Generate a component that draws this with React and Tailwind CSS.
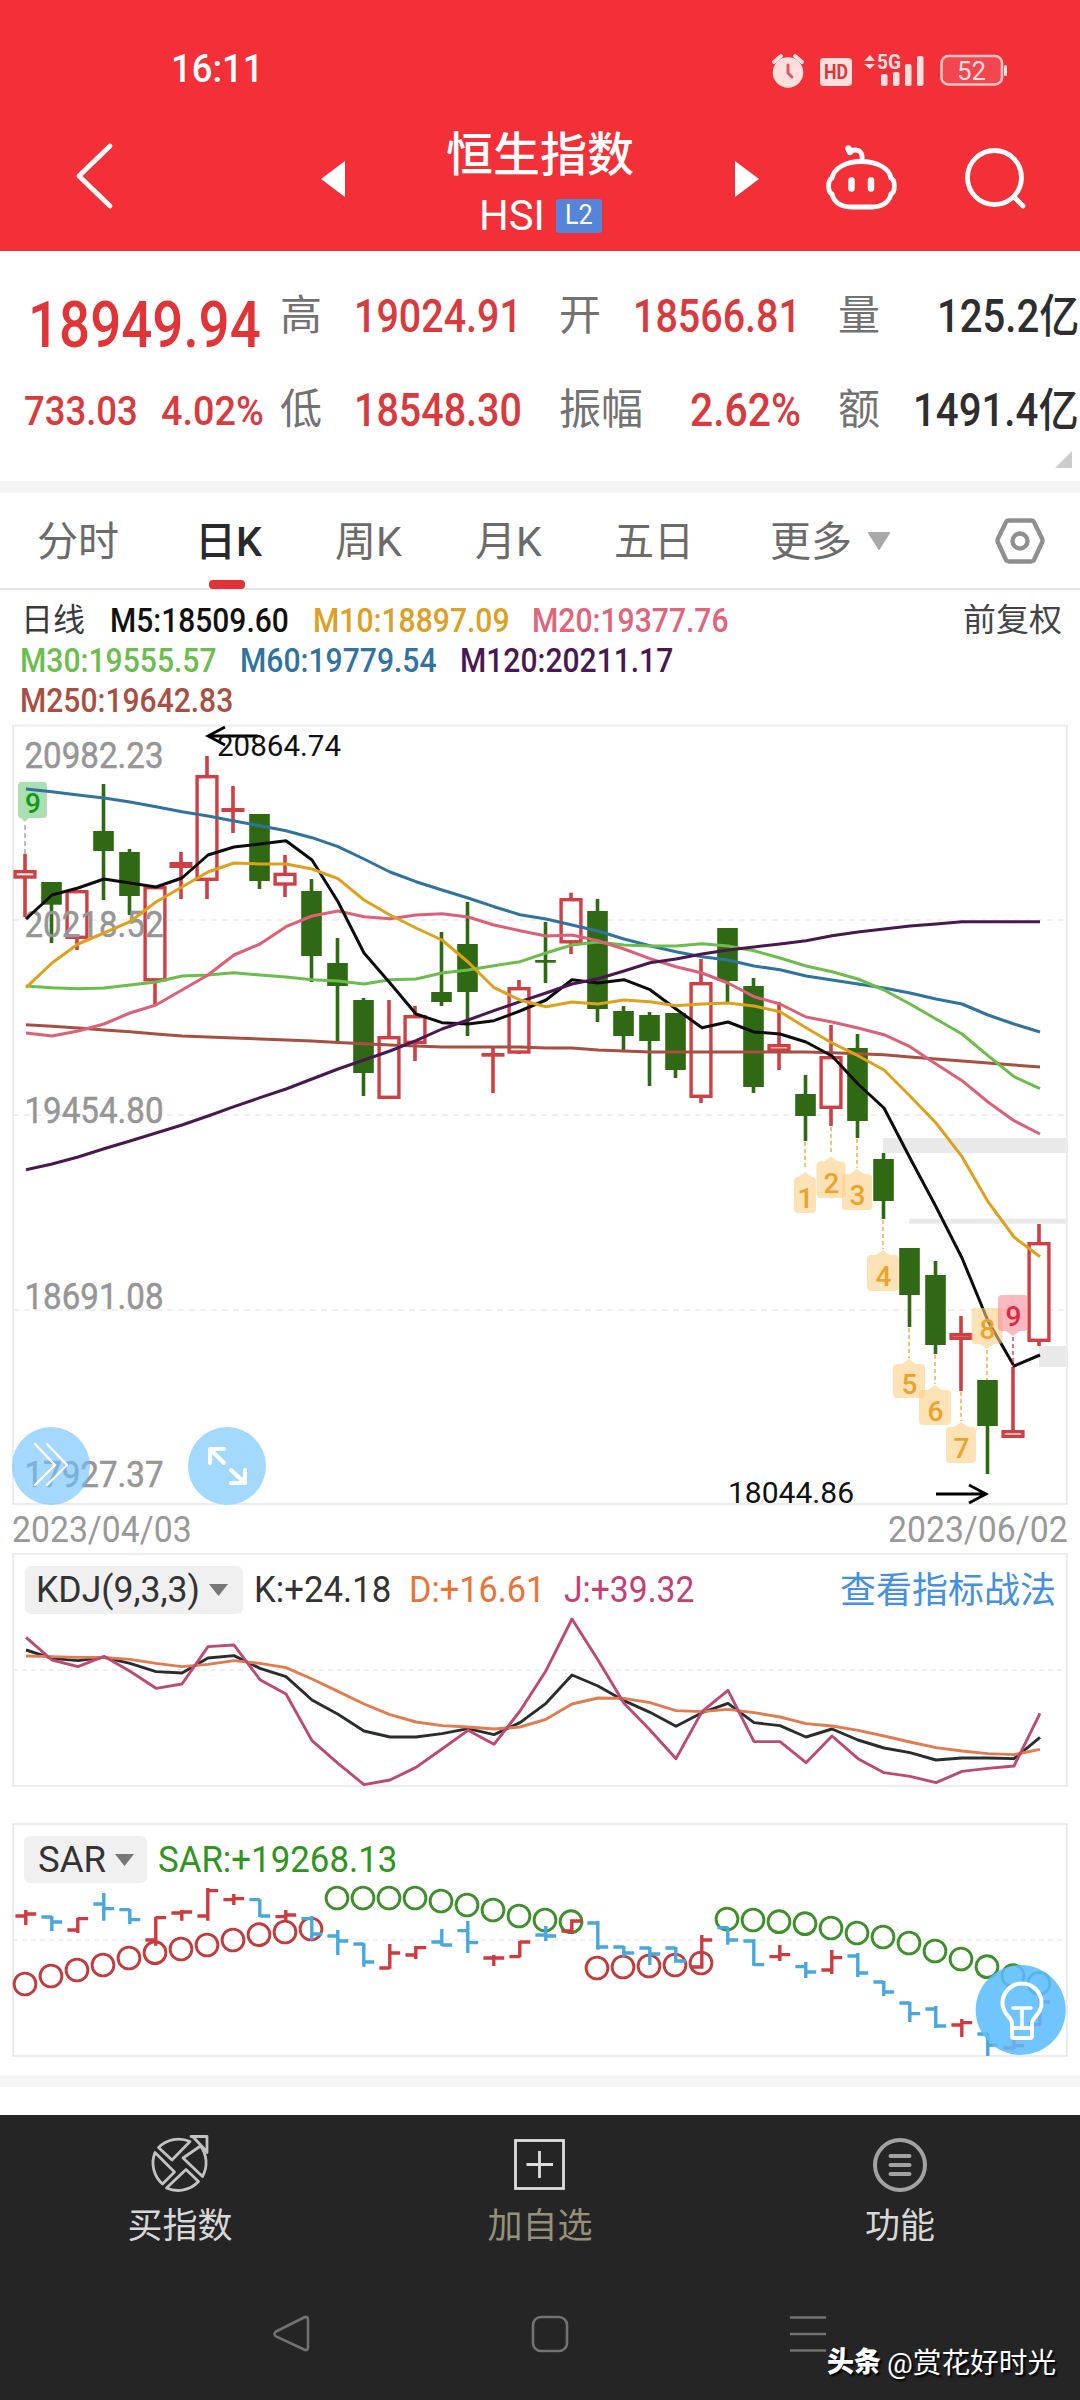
import React, { useLayoutEffect, useRef, useState } from "react";

const FONT = "font-['Roboto','Noto_Sans_CJK_SC',sans-serif]";

/* Text squeezed or stretched horizontally to fill the width of its box. */
function Fit({ className = "", children }) {
  const outer = useRef(null);
  const inner = useRef(null);
  const [scale, setScale] = useState(1);
  useLayoutEffect(() => {
    setScale(outer.current.clientWidth / inner.current.offsetWidth);
  }, [children]);
  return (
    <span ref={outer} className={"block shrink-0 leading-none " + className}>
      <span
        ref={inner}
        className="inline-block origin-left whitespace-nowrap align-top"
        style={{ transform: `scaleX(${scale})` }}
      >
        {children}
      </span>
    </span>
  );
}

const px = (i) => 25 + 26 * i;
const linePath = (ys) => ys.map((y, i) => `${px(i) + 1},${y}`).join(" ");

/* [direction, high, body top, body bottom, low] */
const CANDLES = [
  ["r", 854, 870, 878.7, 917], ["g", 882, 882, 904.7, 943], ["r", 890, 890, 939, 950],
  ["g", 784, 831, 851, 900], ["g", 849, 852, 896, 915], ["r", 886, 886, 981.5, 1004],
  ["r", 852, 862, 868, 899], ["r", 756, 775, 881, 899], ["r", 786, 808, 812, 833],
  ["g", 814, 814, 881, 889], ["r", 855, 872.7, 885.7, 897], ["g", 879, 891, 956, 982],
  ["g", 938, 963, 986, 1042], ["g", 998, 1000, 1073, 1096], ["r", 1000, 1036, 1099, 1099],
  ["r", 1006, 1015, 1044, 1061], ["g", 932, 992, 1002, 1006], ["g", 902, 944, 992, 1036],
  ["r", 1048, 1053, 1056.7, 1093], ["r", 980, 987, 1053.7, 1054], ["g", 922, 960, 962.7, 983],
  ["r", 892.7, 898, 943.5, 954], ["g", 899, 911, 1009, 1022], ["g", 1006, 1011, 1036, 1052],
  ["g", 1012, 1015, 1041, 1086], ["g", 1013, 1013, 1070, 1078], ["r", 959, 982, 1098, 1103],
  ["g", 928, 928, 981, 1002], ["g", 978, 986, 1087, 1093], ["r", 1002, 1044, 1051.7, 1070],
  ["g", 1075, 1094, 1116, 1141], ["r", 1025, 1056, 1109, 1126], ["g", 1034, 1048, 1121, 1138],
  ["g", 1153, 1159, 1201, 1219], ["g", 1248, 1248, 1295, 1327], ["g", 1261, 1275, 1345, 1354],
  ["r", 1316, 1333, 1340, 1391], ["g", 1380, 1380, 1426, 1474], ["r", 1367, 1430, 1438, 1438],
  ["r", 1224, 1242, 1342, 1346],
];

const M5 = [919, 895, 888, 879, 883, 887, 878, 855, 847, 844, 840.7, 860, 901.7, 953, 983, 1014, 1022.7, 1024, 1020.7, 1011, 1000, 979.7, 983, 979.7, 989.7, 1009, 1027.7, 1022, 1032, 1034, 1042, 1056, 1084, 1108, 1158, 1206.7, 1258, 1321, 1366, 1355];
const M10 = [987.7, 963, 944, 933, 921.7, 902, 887, 872, 863, 864, 864, 869, 878.7, 900, 915, 928, 940, 962, 987.7, 1000, 1006.7, 1002, 1004, 1000, 1001.7, 1005.7, 1004, 1003, 1006, 1011.7, 1027.7, 1043, 1055.7, 1070, 1096, 1123, 1156.7, 1201.7, 1237, 1256.7];
const M20 = [1033, 1036, 1031, 1024, 1013, 1005, 990, 975, 955, 944, 926.7, 916, 911, 916.7, 918.7, 915, 913.7, 917, 925, 930.7, 936, 935, 940.7, 949, 958.7, 966.7, 973, 983, 996.7, 1004, 1017, 1022, 1028, 1034.7, 1046.7, 1064, 1080.7, 1102, 1120.7, 1134];
const M30 = [986, 987.7, 988.7, 988, 985, 982, 976, 975, 972.7, 975, 977, 979.7, 981, 984, 979.7, 979, 973, 970, 965.7, 961.7, 953, 945, 942, 945, 946, 946, 943.7, 946, 950.7, 958, 966, 971.7, 979, 990, 1004, 1019, 1034, 1055.7, 1076.7, 1088.7];
const M60 = [789, 791.7, 795, 798, 802, 806.7, 811.7, 816, 821, 825.7, 830.7, 837.7, 846.7, 859, 872, 881.7, 890, 898, 906.7, 914.7, 919, 925, 931, 939, 945.7, 951.7, 956.7, 960, 966, 969.7, 976, 980, 984, 988, 993, 999, 1004, 1015, 1024, 1032];
const M120 = [1169.7, 1164, 1157, 1148.7, 1141, 1133, 1125, 1116, 1106.7, 1097.7, 1089, 1079, 1069, 1060, 1051, 1040.7, 1029, 1020, 1010.7, 1001.7, 993, 984, 978.7, 971, 962.7, 959, 954, 950, 947, 944, 940.7, 935.7, 932, 929, 926, 924, 921.7, 921.7, 921.7, 921.7];
const M250 = [1024.7, 1026.3, 1028, 1030, 1031.7, 1034, 1036, 1037, 1038, 1039, 1040, 1041, 1042.4, 1043.7, 1045, 1046, 1047, 1047, 1047, 1047, 1048, 1048, 1050, 1051, 1052, 1052, 1052, 1052, 1052, 1052, 1052, 1052.7, 1053.7, 1054.7, 1057, 1059, 1061, 1063, 1065, 1067];

const MAS = [
  [M250, "#a84f42"], [M60, "#31739f"], [M30, "#6cbd4c"], [M20, "#dc6078"],
  [M5, "#0c0c0c"], [M120, "#491850"], [M10, "#dda11c"],
];

/* [label, centre x, half width, tip y, far edge y, baseline, dash from, dash to, kind] */
const TAGS = [
  ["1", 805, 11, 1172, 1213, 1208, 1142, 1170, "o"],
  ["2", 831, 14.5, 1156.5, 1198, 1193, 1127, 1155, "o"],
  ["3", 857, 15, 1169, 1210, 1205, 1139, 1168, "o"],
  ["4", 883, 16, 1250, 1291, 1286, 1220, 1249, "o"],
  ["5", 909, 16, 1359, 1398, 1394, 1328, 1358, "o"],
  ["6", 935, 16, 1385, 1425, 1421, 1355, 1384, "o"],
  ["7", 961, 15, 1422, 1463, 1458, 1392, 1421, "o"],
  ["8", 987, 15.5, 1349, 1308, 1339, 1350, 1380, "o"],
  ["9", 1013, 15, 1336, 1295, 1326, 1337, 1366, "r"],
];

function Tag({ t }) {
  const [label, x, hw, tip, edge, base, d1, d2, kind] = t;
  const dir = edge > tip ? 1 : -1;
  const inner = tip + dir * 5;
  const fill = kind === "o" ? "#fbcf86" : "#f68a98";
  const ink = kind === "o" ? "#eda22c" : "#e0283a";
  const k = dir * 4;
  return (
    <g>
      <line x1={x} x2={x} y1={d1} y2={d2} stroke={ink} strokeWidth="1.3" strokeDasharray="4 3" />
      <path
        d={`M${x} ${tip}L${x + 7} ${inner}H${x + hw - 4}Q${x + hw} ${inner} ${x + hw} ${inner + k}V${edge - k}Q${x + hw} ${edge} ${x + hw - 4} ${edge}H${x - hw + 4}Q${x - hw} ${edge} ${x - hw} ${edge - k}V${inner + k}Q${x - hw} ${inner} ${x - hw + 4} ${inner}H${x - 7}Z`}
        fill={fill}
        fillOpacity="0.6"
      />
      <text x={x + 0.5} y={base} textAnchor="middle" fontSize="28" fontWeight="500" fill={ink}>{label}</text>
    </g>
  );
}

function Candle({ c, i }) {
  const [dir, hi, top, bot, lo] = c;
  const x = px(i);
  if (dir === "g") {
    return (
      <g fill="#2f6913">
        <rect x={x - 1.3} y={hi} width="3.6" height={lo - hi} />
        <rect x={x - 9.8} y={top} width="20.6" height={bot - top} />
      </g>
    );
  }
  const h = bot - top;
  return (
    <g fill="#d03f43">
      <rect x={x - 1.8} y={hi} width="3.6" height={top - hi + 1} />
      <rect x={x - 1.8} y={bot - 1} width="3.6" height={Math.max(lo - bot + 1, 1)} />
      {h < 6.5 ? (
        <rect x={x - 11.5} y={top} width="23" height={h} />
      ) : (
        <rect x={x - 9.9} y={top + 1.7} width="19.8" height={h - 3.4} fill="#fff" stroke="#d03f43" strokeWidth="3.4" />
      )}
    </g>
  );
}

const Y_LABELS = [["20982.23", 768], ["20218.52", 937], ["19454.80", 1122.5], ["18691.08", 1309], ["17927.37", 1487]];

function MainChart() {
  return (
    <svg viewBox="0 720 1080 790" className="block h-[790px] w-[1080px]">
      <g stroke="#efefef" strokeWidth="2" strokeDasharray="6 5">
        <line x1="13" x2="1067" y1="920" y2="920" />
        <line x1="13" x2="1067" y1="1115" y2="1115" />
        <line x1="13" x2="1067" y1="1310" y2="1310" />
      </g>
      <g fill="#e9e9e9">
        <rect x="883" y="1138" width="184" height="15" />
        <rect x="909" y="1218.7" width="158" height="5" />
        <rect x="1039" y="1346" width="28" height="21" />
      </g>
      <rect x="13" y="725.5" width="1054" height="778.5" fill="none" stroke="#ececec" strokeWidth="2" />
      {CANDLES.map((c, i) => <Candle key={i} c={c} i={i} />)}
      <g fill="#969696" fontSize="36" fontWeight="400" stroke="#969696" strokeWidth="0.5">
        {Y_LABELS.map(([t, y]) => (
          <text key={t} x="24.5" y={y} textLength="139" lengthAdjust="spacingAndGlyphs">{t}</text>
        ))}
      </g>
      <path d="M21 782H44Q47 782 47 786V814Q47 818 43 818H29L25 822L21 818Q18 818 18 814V786Q18 782 21 782Z" fill="#a9dfb1" />
      <line x1="25" x2="25" y1="825" y2="854" stroke="#9a9a9a" strokeWidth="1.3" strokeDasharray="5 3" />
      <text x="33" y="813" textAnchor="middle" fontSize="28" fontWeight="500" fill="#109a14">9</text>
      {MAS.map(([ys, color], k) => (
        <polyline key={k} points={linePath(ys)} fill="none" stroke={color} strokeWidth="3" strokeLinejoin="round" />
      ))}
      {TAGS.map((t) => <Tag key={t[0]} t={t} />)}
      <g stroke="#000" strokeWidth="2.8" fill="none">
        <path d="M258 736H208M225 727L208 736L225 745" />
        <path d="M936 1494H986M969 1485L986 1494L969 1503" />
      </g>
      <g fill="#111" fontSize="30" fontWeight="400">
        <text x="217" y="756" textLength="124" lengthAdjust="spacingAndGlyphs">20864.74</text>
        <text x="728" y="1502.5" textLength="126" lengthAdjust="spacingAndGlyphs">18044.86</text>
      </g>
      <circle cx="51" cy="1466" r="39" fill="#6cc0ff" fillOpacity="0.62" />
      <circle cx="227" cy="1466" r="39" fill="#a4d9fe" />
      <g fill="none" stroke="#fff" strokeLinecap="round" strokeLinejoin="round">
        <path d="M35 1444L55 1465L35 1485M47 1444L67 1465L47 1485" strokeWidth="2.4" />
        <path d="M224 1449H210V1463M210 1449L224 1463M245 1470V1483H231M245 1483L231 1470" strokeWidth="4" />
      </g>
    </svg>
  );
}

const K = [300, 325, 332, 322, 340, 365, 369, 324, 317, 355, 380, 450, 493, 543, 561, 561, 551, 536, 554, 518, 460, 375, 408, 452, 487, 529, 488, 460, 518, 527, 561, 537, 570, 594, 608, 630, 624, 624, 626, 562];
const D = [318, 320, 322, 322, 328, 340, 350, 343, 332, 340, 353, 387, 424, 462, 494, 516, 527, 531, 537, 531, 508, 462, 444, 445, 458, 482, 485, 478, 488, 501, 521, 528, 541, 558, 576, 593, 603, 611, 614, 598];
const J = [262, 330, 350, 319, 364, 415, 402, 290, 285, 389, 432, 572, 640, 704, 690, 652, 597, 541, 583, 483, 362, 207, 330, 460, 540, 626, 485, 421, 575, 575, 638, 558, 626, 668, 679, 698, 664, 655, 648, 490];

function KdjPanel() {
  return (
    <section className="relative h-[250px]">
      <svg viewBox="0 0 1080 250" className="absolute inset-0 h-[250px] w-[1080px]">
        <rect x="13" y="4" width="1054" height="232" fill="none" stroke="#ececec" strokeWidth="2" />
        <line x1="13" x2="1067" y1="120" y2="120" stroke="#ececec" strokeWidth="1.6" strokeDasharray="5 4" />
        {[[K, "#2a2d30"], [D, "#e17c50"], [J, "#bd4a74"]].map(([v, c]) => (
          <polyline key={c} points={linePath(v.map((y) => y / 3))} fill="none" stroke={c} strokeWidth="2.9" strokeLinejoin="round" />
        ))}
      </svg>
      <div className="relative flex h-[79px] items-center pl-[25px] text-[36px]">
        <div className="flex h-[48px] w-[218px] items-center rounded-md bg-[#f0f0f0] pl-[11px] text-[#333]">
          <Fit className="w-[164px]">KDJ(9,3,3)</Fit>
          <svg viewBox="0 0 20 14" className="ml-[9px] h-[14px] w-[20px]"><path d="M0 1H19L9.5 13Z" fill="#777" /></svg>
        </div>
        <Fit className="ml-[11px] w-[137px] text-[#333]">K:+24.18</Fit>
        <Fit className="ml-[18px] w-[136px] text-[#e8743a]">D:+16.61</Fit>
        <Fit className="ml-[19px] w-[130px] text-[#c43f73]">J:+39.32</Fit>
        <Fit className="mt-[3px] ml-[146px] w-[216px] text-[#4590e0]">查看指标战法</Fit>
      </div>
    </section>
  );
}

const DOTS_RED = [[0, [522, 498, 480, 465, 444, 428, 417, 405, 390, 374, 366, 357]], [22, [474, 471, 468, 465, 459]]];
const DOTS_GREEN = [[12, [264, 264, 264, 264, 273, 285, 300, 318, 330, 335]], [27, [327, 330, 335, 341, 354, 369, 381, 399, 423, 447, 470, 497, 520]]];

/* [colour, open, close, high, low] */
const BARS = [
  ["r", 318, 312, 300, 345], ["b", 321, 336, 318, 363], ["r", 360, 326, 323, 369], ["b", 282, 296, 249, 332],
  ["b", 299, 329, 297, 342], ["r", 390, 323, 320, 407], ["r", 309, 306, 300, 332], ["r", 318, 242, 234, 332],
  ["r", 269, 266, 252, 285], ["b", 269, 318, 268, 321], ["r", 320, 315, 300, 332], ["b", 326, 372, 318, 391],
  ["b", 378, 393, 360, 435], ["b", 402, 456, 400, 470], ["r", 474, 429, 402, 476], ["r", 435, 413, 408, 447],
  ["b", 396, 405, 357, 407], ["b", 362, 398, 333, 429], ["r", 444, 444, 435, 468], ["r", 440, 396, 393, 442],
  ["b", 375, 378, 348, 393], ["r", 363, 333, 328, 371], ["b", 339, 411, 333, 419], ["b", 411, 429, 408, 440],
  ["b", 414, 432, 411, 465], ["b", 414, 453, 411, 458], ["r", 471, 390, 375, 476], ["b", 353, 390, 350, 404],
  ["b", 393, 464, 388, 467], ["r", 440, 434, 405, 453], ["b", 470, 486, 456, 504], ["r", 480, 443, 420, 492],
  ["b", 438, 489, 429, 501], ["b", 516, 546, 513, 558], ["b", 579, 611, 576, 636], ["b", 597, 648, 588, 654],
  ["r", 645, 638, 627, 681], ["b", 672, 705, 670, 738], ["r", 714, 707, 690, 717], ["r", 644, 576, 565, 648],
];

function Dots({ groups, color }) {
  return groups.map(([start, ys]) =>
    ys.map((y, k) => (
      <circle key={start + k} cx={px(start + k)} cy={10 + y / 3} r="10.9" fill="none" stroke={color} strokeWidth="2.9" />
    ))
  );
}

function SarPanel() {
  return (
    <section className="relative h-[275px]">
      <svg viewBox="0 0 1080 275" className="absolute inset-0 h-[275px] w-[1080px]">
        <rect x="13" y="24" width="1054" height="232" fill="none" stroke="#ececec" strokeWidth="2" />
        <line x1="13" x2="1067" y1="140" y2="140" stroke="#ececec" strokeWidth="1.6" strokeDasharray="5 4" />
        <Dots groups={DOTS_RED} color="#c23b3d" />
        <Dots groups={DOTS_GREEN} color="#3f8f2c" />
        {BARS.map(([c, o, cl, h, l], i) => {
          const x = px(i) + 0.8;
          const y = (v) => 10 + v / 3;
          return (
            <path
              key={i}
              d={`M${x - 10.4} ${y(o)}H${x}M${x} ${y(cl)}H${x + 10.4}M${x} ${y(h)}V${y(l)}`}
              fill="none"
              stroke={c === "r" ? "#cf3a3e" : "#48a7dd"}
              strokeWidth="3.4"
            />
          );
        })}
        <circle cx="1020.7" cy="210" r="45" fill="#5cbcff" fillOpacity="0.87" />
        <g fill="none" stroke="#fff" strokeWidth="4" strokeLinecap="round" strokeLinejoin="round">
          <path d="M1012 227V223C1012 217 1002.500 215 1002.500 203A19.500 19.500 0 0 1 1041.500 203C1041.500 215 1032 217 1032 223V227" />
          <path d="M1012 228V236Q1012 238 1014 238H1030Q1032 238 1032 236V228Z" />
          <path d="M1013 208H1031M1022 208V228" strokeWidth="3.600" />
        </g>
      </svg>
      <div className="relative flex h-[119px] items-center pl-[24px] text-[36px]">
        <div className="flex h-[47px] w-[123px] items-center rounded-md bg-[#f0f0f0] pl-[14px] text-[#333]">
          <Fit className="w-[68px]">SAR</Fit>
          <svg viewBox="0 0 20 14" className="ml-[9px] h-[14px] w-[20px]"><path d="M0 1H19L9.5 13Z" fill="#777" /></svg>
        </div>
        <Fit className="ml-[11px] w-[239px] text-[#2f9420]">SAR:+19268.13</Fit>
      </div>
    </section>
  );
}

function StatusBar() {
  return (
    <div className="flex h-[128px] items-center pt-[10px]">
      <Fit className="ml-[171px] w-[92px] text-[38px] font-medium">16:11</Fit>
      <svg viewBox="770 45 90 45" className="ml-[507px] h-[45px] w-[90px]">
        <circle cx="788" cy="70.5" r="13" fill="#f32f38" stroke="#ffdede" strokeWidth="4.500" />
        <circle cx="788" cy="70.5" r="12" fill="#ffdede" />
        <path d="M774 60L781 54M802 60L795 54" stroke="#ffdede" strokeWidth="4" strokeLinecap="round" />
        <path d="M788 63V71L792 75" fill="none" stroke="#d95a60" strokeWidth="3" strokeLinecap="round" />
        <rect x="820" y="56" width="32" height="28" rx="4" fill="#ffdede" />
        <text x="824" y="77" textLength="24" lengthAdjust="spacingAndGlyphs" fontSize="20" fontWeight="700" fill="#d8363d">HD</text>
      </svg>
      <svg viewBox="860 45 150 45" className="h-[45px] w-[150px]" fill="#ffdede">
        <path d="M864 59L870 53L875 59ZM864 62H875L870 67Z" />
        <text x="877" y="67" textLength="24" lengthAdjust="spacingAndGlyphs" fontSize="20" fontWeight="700">5G</text>
        <rect x="881" y="72" width="6.5" height="12" rx="2" />
        <rect x="893" y="70" width="6.5" height="14" rx="2" />
        <rect x="905" y="62" width="6.5" height="22" rx="2" />
        <rect x="917" y="54" width="6.5" height="30" rx="2" />
        <rect x="941.5" y="54" width="60.5" height="28.5" rx="7" fill="#f3464e" stroke="#ffc4c6" strokeWidth="2.6" />
        <rect x="1004" y="63" width="3" height="11" rx="1.5" />
        <text x="957" y="77.500" textLength="29" lengthAdjust="spacingAndGlyphs" fontSize="26">52</text>
      </svg>
    </div>
  );
}

function TitleBar() {
  return (
    <div className="flex h-[123px] items-start">
      <svg viewBox="60 128 70 90" className="ml-[60px] h-[90px] w-[70px]">
        <path d="M110 146L79 176L110 206" fill="none" stroke="#fff" strokeWidth="4.800" strokeLinecap="round" strokeLinejoin="round" />
      </svg>
      <svg viewBox="310 128 50 90" className="ml-[180px] h-[90px] w-[50px]"><path d="M321 179L345 161V197Z" fill="#fff" /></svg>
      <div className="flex w-[360px] flex-col items-center">
        <div className="flex h-[50px] items-center pt-[2px] text-[47px] leading-none font-medium">恒生指数</div>
        <div className="flex h-[75px] items-center">
          <Fit className="w-[66px] text-[43px]">HSI</Fit>
          <span className="ml-[11px] flex h-[34px] w-[46px] items-center justify-center rounded-[3px] bg-[#5585d9] text-[27px] leading-none">
            <Fit className="w-[28px]">L2</Fit>
          </span>
        </div>
      </div>
      <svg viewBox="720 128 50 90" className="h-[90px] w-[50px]"><path d="M759 179L735 161V197Z" fill="#fff" /></svg>
      <svg viewBox="815 128 95 90" className="ml-[45px] h-[90px] w-[95px]" fill="none" stroke="#fff" strokeWidth="4.800" strokeLinecap="round">
        <path d="M861 161.500C877 161.500 889 168 891 178C895.500 180 895.500 192 891 194C889 203 881 207 871 207H852C842 207 834 203 832 194C827.500 192 827.500 180 832 178C834 168 846 161.500 861 161.500Z" />
        <path d="M862 160C863 152 859 148 850 151" />
        <path d="M848.500 148.500L850 152" strokeWidth="6.500" />
        <path d="M851.500 180.500V188.500M871 180.500V188.500" strokeWidth="6.500" />
      </svg>
      <svg viewBox="955 128 80 90" className="ml-[45px] h-[90px] w-[80px]" fill="none" stroke="#fff" strokeWidth="4.800" strokeLinecap="round">
        <circle cx="994.500" cy="177.500" r="27" />
        <path d="M1014 197L1023 206" />
      </svg>
    </div>
  );
}

function Quote() {
  return (
    <section className="flex h-[230px] text-[46px] font-medium text-[#d93a3d]">
      <div className="flex w-[280px] shrink-0 flex-col">
        <Fit className="mt-[42px] ml-[28px] w-[233px] text-[65px] text-[#e13437]">18949.94</Fit>
        <div className="mt-[34px] flex text-[40px]">
          <Fit className="ml-[24px] w-[114px]">733.03</Fit>
          <Fit className="ml-[23px] w-[103px]">4.02%</Fit>
        </div>
      </div>
      <div className="flex w-[800px] shrink-0 flex-col pt-[17px]">
        <div className="flex h-[95px] items-center">
          <span className="w-[74px] pt-[1px] text-[42px] leading-none font-normal text-[#727272]">高</span>
          <Fit className="w-[168px]">19024.91</Fit>
          <span className="ml-[37px] w-[74px] pt-[1px] text-[42px] leading-none font-normal text-[#727272]">开</span>
          <Fit className="w-[168px]">18566.81</Fit>
          <span className="ml-[37px] w-[99px] pt-[1px] text-[42px] leading-none font-normal text-[#727272]">量</span>
          <Fit className="w-[142px] text-[#2e2e2e]">125.2亿</Fit>
        </div>
        <div className="flex h-[94px] items-center">
          <span className="w-[74px] text-[42px] leading-none font-normal text-[#727272]">低</span>
          <Fit className="w-[168px]">18548.30</Fit>
          <span className="ml-[37px] w-[131px] text-[42px] leading-none font-normal text-[#727272]">振幅</span>
          <Fit className="w-[111px]">2.62%</Fit>
          <span className="ml-[37px] w-[75px] text-[42px] leading-none font-normal text-[#727272]">额</span>
          <Fit className="w-[166px] text-[#2e2e2e]">1491.4亿</Fit>
        </div>
        <svg viewBox="0 0 18 18" className="-mt-[7px] mr-[8px] h-[18px] w-[18px] self-end"><path d="M18 1V18H1Z" fill="#cbcbcb" /></svg>
      </div>
    </section>
  );
}

function Tabs() {
  return (
    <nav className="relative flex h-[97px] items-center border-b-2 border-[#e6e6e6] pt-[4px] text-[41px] leading-none text-[#6b6b6b]">
      <span className="ml-[37px] w-[158px]">分时</span>
      <span className="w-[140px] font-medium text-[#2a2a2a]"><Fit className="w-[67px]">日K</Fit></span>
      <span className="w-[140px]"><Fit className="w-[67px]">周K</Fit></span>
      <span className="w-[139px]"><Fit className="w-[67px]">月K</Fit></span>
      <span className="w-[156px]"><Fit className="w-[80px]">五日</Fit></span>
      <span>更多</span>
      <svg viewBox="0 0 24 20" className="-mt-[3px] ml-[15px] h-[20px] w-[24px]"><path d="M2 1H22Q24 1 22.500 3L13 18Q12 20 11 18L1.500 3Q0 1 2 1Z" fill="#a8a8a8" /></svg>
      <svg viewBox="988 512 60 60" className="-mt-[1px] ml-[97px] h-[60px] w-[60px]" fill="none" stroke="#8f8f8f">
        <path d="M1009 520.500H1031Q1033 520.500 1034 522L1042 538.500Q1043 540.500 1042 542.500L1034 560Q1033 561.500 1031 561.500H1009Q1007 561.500 1006 560L998 542.500Q997 540.500 998 538.500L1006 522Q1007 520.500 1009 520.500Z" strokeWidth="4.400" />
        <circle cx="1020" cy="541" r="7.500" strokeWidth="4.400" />
      </svg>
      <span className="absolute bottom-[-1px] left-[209px] h-[9px] w-[36px] rounded-[4px] bg-[#e23237]" />
    </nav>
  );
}

function Legend() {
  return (
    <section className="flex h-[130px] flex-col pt-[10px] text-[33px] font-medium">
      <div className="flex h-[41px] items-center">
        <Fit className="ml-[21px] w-[64px] text-[32px] font-normal text-[#3a3a3a]">日线</Fit>
        <Fit className="ml-[25px] w-[179px] text-[#111]">M5:18509.60</Fit>
        <Fit className="ml-[24px] w-[197px] text-[#dca024]">M10:18897.09</Fit>
        <Fit className="ml-[22px] w-[197px] text-[#e0647a]">M20:19377.76</Fit>
        <Fit className="ml-[234px] w-[99px] text-[32px] font-normal text-[#444]">前复权</Fit>
      </div>
      <div className="flex h-[41px] items-center">
        <Fit className="ml-[20px] w-[197px] text-[#6cbd4c]">M30:19555.57</Fit>
        <Fit className="ml-[23px] w-[197px] text-[#31739f]">M60:19779.54</Fit>
        <Fit className="ml-[23px] w-[213px] text-[#491850]">M120:20211.17</Fit>
      </div>
      <div className="flex h-[41px] items-center">
        <Fit className="ml-[20px] w-[213px] text-[#a84f42]">M250:19642.83</Fit>
      </div>
    </section>
  );
}

function BottomBar() {
  return (
    <footer className="h-[285px] bg-[#252525]">
      <div className="flex h-[175px] text-[35px] leading-none text-[#d8d8d8]">
        <div className="flex w-[360px] flex-col items-center pt-[16px]">
          <svg viewBox="148 2131 64 66" className="h-[66px] w-[64px]" fill="none" stroke="#c2c2c2" strokeWidth="2.800" strokeLinejoin="round">
            <path d="M191 2136.500H207V2152.500Q206 2150 203.500 2148L194.500 2138.500Q193 2137 191 2136.500Z" />
            <path d="M158.500 2147.500A28 28 0 0 1 190 2141.500L172 2160Z" />
            <path d="M155 2152.500L174.500 2172L162.500 2184A28 28 0 0 1 155 2152.500Z" />
            <path d="M200.500 2146L183 2158L202.500 2176.500A28 28 0 0 0 200.500 2146Z" />
            <path d="M186 2169.500L198.500 2181.500A28 28 0 0 1 166.500 2188Z" />
          </svg>
          <span className="mt-[12px]">买指数</span>
        </div>
        <div className="flex w-[360px] flex-col items-center pt-[16px] text-[#979079]">
          <svg viewBox="508 2131 64 66" className="h-[66px] w-[64px]" fill="none" stroke="#dedede" strokeWidth="2.800">
            <rect x="515.500" y="2140.500" width="48" height="48" />
            <path d="M526.500 2164.500H553M539.500 2151V2178" />
          </svg>
          <span className="mt-[12px]">加自选</span>
        </div>
        <div className="flex w-[360px] flex-col items-center pt-[16px]">
          <svg viewBox="868 2131 64 66" className="h-[66px] w-[64px]" fill="none" stroke="#a2a2a2" strokeWidth="4">
            <circle cx="900" cy="2165" r="25" />
            <path d="M890.500 2156H909.500M890.500 2165H909.500M890.500 2174H909.500" strokeLinecap="round" />
          </svg>
          <span className="mt-[12px]">功能</span>
        </div>
      </div>
      <div className="relative flex h-[110px] items-start">
        <svg viewBox="270 2290 560 80" className="ml-[270px] h-[80px] w-[560px]" fill="none" stroke="#727272" strokeWidth="2.600">
          <path d="M276 2331.500L304 2317.500Q308 2315.500 308 2320V2347Q308 2351.500 304 2349.500L276 2336.500Q273 2334 276 2331.500Z" />
          <rect x="533" y="2317" width="34" height="34" rx="8" />
          <path d="M790 2317.500H826M790 2334H826M790 2350.500H826" />
        </svg>
        <div className="absolute top-[58px] left-[827px] flex items-center text-[28px] leading-none text-white [text-shadow:2px_2px_2px_#000]">
          <Fit className="w-[54px] font-black">头条</Fit>
          <Fit className="mt-[2px] ml-[6px] w-[169px]">@赏花好时光</Fit>
        </div>
      </div>
    </footer>
  );
}

export default function App() {
  return (
    <div className={"h-[2400px] w-[1080px] overflow-hidden bg-white " + FONT}>
      <header className="h-[251px] bg-[#f32f38] text-white">
        <StatusBar />
        <TitleBar />
      </header>
      <Quote />
      <div className="h-[12px] bg-[#f4f4f4]" />
      <Tabs />
      <Legend />
      <MainChart />
      <div className="flex h-[40px] items-center justify-between pr-[12px] pl-[12px] text-[36px] text-[#999]">
        <Fit className="w-[180px]">2023/04/03</Fit>
        <Fit className="w-[180px]">2023/06/02</Fit>
      </div>
      <KdjPanel />
      <SarPanel />
      <div className="h-[12px] bg-[#f5f5f5]" />
      <div className="h-[28px]" />
      <BottomBar />
    </div>
  );
}
